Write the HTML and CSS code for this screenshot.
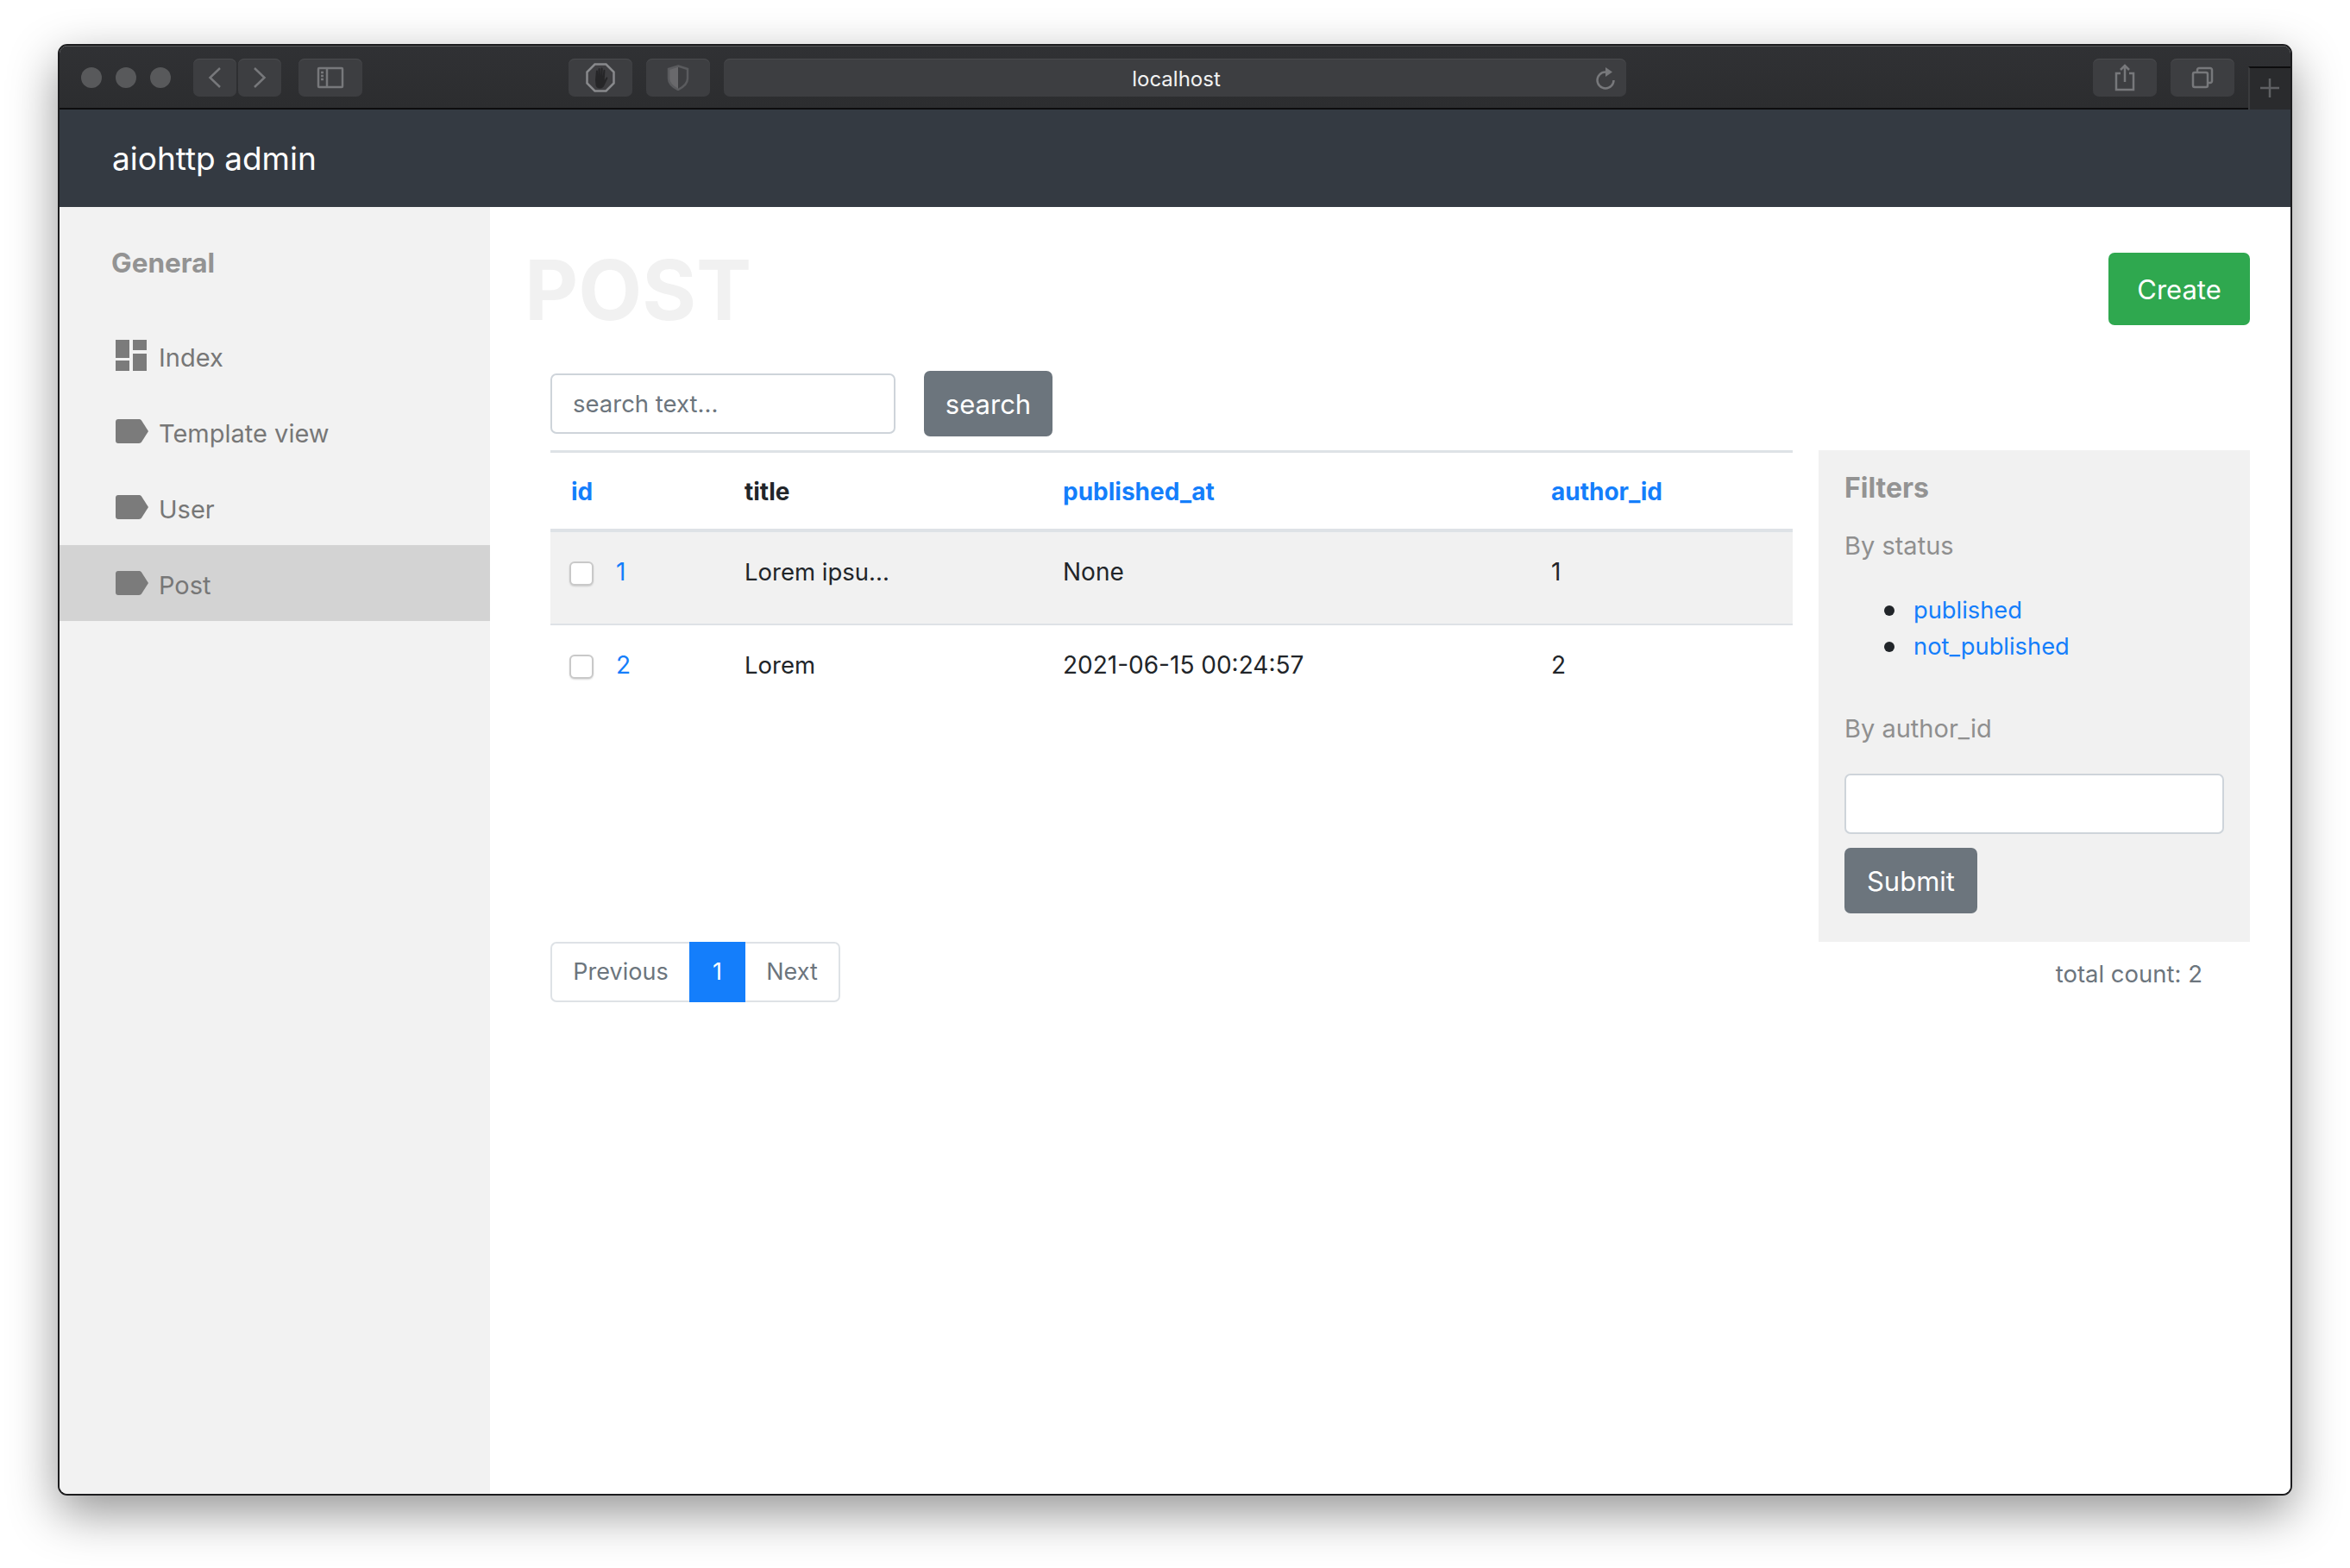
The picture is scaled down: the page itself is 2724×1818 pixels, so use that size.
FILE: index.html
```html
<!DOCTYPE html>
<html lang="en">
    <head>
        <meta charset="UTF-8">
        <meta name="viewport" content="width=device-width, initial-scale=1.0">
        <title>aiohttp admin</title>
        <link rel="stylesheet" href="styles.css">
    </head>

    <body>
        <div class="window">
            <!-- browser toolbar -->
            <div class="toolbar">
                <span class="light light-first"></span>
                <span class="light"></span>
                <span class="light"></span>

                <span class="tool tool-nav tool-back">
                    <svg width="16" height="26" viewBox="0 0 16 26"><path d="M14 2 2.500 13 14 24"/></svg>
                </span>
                <span class="tool tool-nav tool-forward">
                    <svg width="16" height="26" viewBox="0 0 16 26"><path d="M2 2 13.500 13 2 24"/></svg>
                </span>
                <span class="tool tool-side">
                    <svg width="32" height="26" viewBox="0 0 32 26">
                        <rect x="2" y="2" width="28" height="22" rx="1"/>
                        <path d="M12 2v22M5 7h3M5 11h3M5 15h3"/>
                    </svg>
                </span>
                <span class="tool tool-stop">
                    <svg width="34" height="34" viewBox="0 0 34 34">
                        <path class="octagon" d="M10.500 1.500h13l9 9v13l-9 9h-13l-9-9v-13z"/>
                        <path class="hand" d="M12 9c1-1 2 0 2 1v6l.5-9c.2-1.500 2-1.500 2.200 0l.3 8.500.6-9c.2-1.300 2-1.200 2 .2l-.1 9 1-7c.3-1.300 2-1 1.900.3l-.7 11 1.800-3c.8-1.200 2.300-.3 1.800 1l-3.800 8c-1 2-2.500 3.500-5 3.500-3 0-4.500-1.500-5-4l-.5-6z"/>
                    </svg>
                </span>
                <span class="tool tool-shield">
                    <svg width="26" height="30" viewBox="0 0 26 30">
                        <path class="shield-half" d="M13 1.500 2 5v11c0 6 5 10 11 13z"/>
                        <path d="M13 1.500 24 5v11c0 6-5 10-11 13-6-3-11-7-11-13V5z"/>
                    </svg>
                </span>
                <div class="url-bar">
                    <span class="url-text">localhost</span>
                    <svg class="reload" width="24" height="28" viewBox="0 0 24 28">
                        <path d="M12 7.500a9.500 9.500 0 1 0 9.500 9.500"/>
                        <path class="reload-head" d="M12 2v11l8-5.500z"/>
                    </svg>
                </div>
                <span class="tool tool-share">
                    <svg width="24" height="32" viewBox="0 0 24 32">
                        <path d="M7 11H2v19h20V11h-5M12 21V2M7 7l5-5 5 5"/>
                    </svg>
                </span>
                <span class="tool tool-tabs">
                    <svg width="26" height="26" viewBox="0 0 26 26">
                        <rect x="2" y="7" width="17" height="17" rx="2"/>
                        <path d="M7 7V4c0-1 1-2 2-2h13c1 0 2 1 2 2v13c0 1-1 2-2 2h-3"/>
                    </svg>
                </span>
                <span class="new-tab">
                    <svg width="24" height="24" viewBox="0 0 24 24"><path d="M12 1v22M1 12h22"/></svg>
                </span>
            </div>

            <div class="navbar">
                <a class="brand">aiohttp admin</a>
            </div>

            <div class="layout">
                <div class="sidebar">
                    <h4 class="sidebar-title">General</h4>
                    <ul class="menu">
                        <li class="menu-item">
                            <svg class="menu-icon" width="38" height="36" viewBox="0 0 38 36">
                                <path d="M0 0h16v21H0zM20 0h16v12H20zM0 24h16v12H0zM20 16h16v20H20z"/>
                            </svg>
                            <span>Index</span>
                        </li>
                        <li class="menu-item menu-item-tag">
                            <svg class="menu-icon" width="38" height="28" viewBox="0 0 38 28">
                                <path d="M3 0h24c1.500 0 2.500.6 3.200 1.700L38 14l-7.800 12.300c-.7 1.100-1.700 1.700-3.200 1.700H3c-1.700 0-3-1.300-3-3V3c0-1.700 1.300-3 3-3z"/>
                            </svg>
                            <span>Template view</span>
                        </li>
                        <li class="menu-item menu-item-tag">
                            <svg class="menu-icon" width="38" height="28" viewBox="0 0 38 28">
                                <path d="M3 0h24c1.500 0 2.500.6 3.200 1.700L38 14l-7.800 12.300c-.7 1.100-1.700 1.700-3.200 1.700H3c-1.700 0-3-1.300-3-3V3c0-1.700 1.300-3 3-3z"/>
                            </svg>
                            <span>User</span>
                        </li>
                        <li class="menu-item menu-item-tag active">
                            <svg class="menu-icon" width="38" height="28" viewBox="0 0 38 28">
                                <path d="M3 0h24c1.500 0 2.500.6 3.200 1.700L38 14l-7.800 12.300c-.7 1.100-1.700 1.700-3.200 1.700H3c-1.700 0-3-1.300-3-3V3c0-1.700 1.300-3 3-3z"/>
                            </svg>
                            <span>Post</span>
                        </li>
                    </ul>
                </div>

                <div class="main">
                    <div class="page-head">
                        <h1 class="page-title">POST</h1>
                        <button class="btn btn-create">Create</button>
                    </div>

                    <form class="search-form">
                        <input class="input input-search" type="text" placeholder="search text...">
                        <button class="btn btn-grey btn-search">search</button>
                    </form>

                    <div class="columns">
                        <div class="col-left">
                            <div class="table-wrap">
                                <table class="table">
                                    <colgroup>
                                        <col class="w-id">
                                        <col class="w-title">
                                        <col class="w-date">
                                        <col class="w-author">
                                    </colgroup>
                                    <thead>
                                        <tr>
                                            <th><a class="link">id</a></th>
                                            <th>title</th>
                                            <th><a class="link">published_at</a></th>
                                            <th><a class="link">author_id</a></th>
                                        </tr>
                                    </thead>
                                    <tbody>
                                        <tr class="row-hover">
                                            <td class="cell-id"><input class="check" type="checkbox"><a class="link">1</a></td>
                                            <td class="cell-title">Lorem ipsu...</td>
                                            <td>None</td>
                                            <td>1</td>
                                        </tr>
                                        <tr>
                                            <td class="cell-id"><input class="check" type="checkbox"><a class="link">2</a></td>
                                            <td class="cell-title">Lorem</td>
                                            <td>2021-06-15 00:24:57</td>
                                            <td>2</td>
                                        </tr>
                                    </tbody>
                                </table>
                            </div>

                            <div class="pagination">
                                <a class="page page-first">Previous</a>
                                <a class="page page-active">1</a>
                                <a class="page page-last">Next</a>
                            </div>
                        </div>

                        <div class="col-right">
                            <div class="filters">
                                <h5 class="filters-title">Filters</h5>
                                <p class="filter-label">By status</p>
                                <ul class="filter-list">
                                    <li><a class="link">published</a></li>
                                    <li><a class="link">not_published</a></li>
                                </ul>
                                <p class="filter-label filter-label-author">By author_id</p>
                                <input class="input input-filter" type="text">
                                <button class="btn btn-grey btn-submit">Submit</button>
                            </div>
                            <p class="total">total count: 2</p>
                        </div>
                    </div>
                </div>
            </div>
        </div>
    </body>
</html>
```

FILE: styles.css
```css
* {
    box-sizing: border-box;
}

html, body {
    margin: 0;
    height: 100%;
    background-color: #ffffff;
}

body {
    padding: 51px 0 0 67px;
    font-family: Inter, "Noto Sans", sans-serif;
    font-size: 28px;
    color: #212529;
    overflow: hidden;
}

.window {
    display: flex;
    flex-direction: column;
    width: 2590px;
    height: 1683px;
    border: 2px solid #1c1c1e;
    border-radius: 11px;
    overflow: hidden;
    background-color: #f2f2f2;
    box-shadow: 0 20px 56px rgba(0, 0, 0, 0.42);
}

/* toolbar */
.toolbar {
    display: flex;
    align-items: flex-start;
    flex-shrink: 0;
    height: 74px;
    padding: 15px 0 0 25px;
    background: linear-gradient(#303134, #2c2d2f);
    border-bottom: 2px solid #0d0d0e;
    box-shadow: inset 0 1px 0 #565759;
}

.light {
    width: 24px;
    height: 24px;
    margin: 10px 0 0 16px;
    border-radius: 50%;
    background-color: #58595b;
}

.light-first {
    margin-left: 0;
}

.tool {
    display: flex;
    align-items: center;
    justify-content: center;
    width: 74px;
    height: 44px;
    border-radius: 7px;
    background-color: #3d3e41;
    box-shadow: inset 0 1px 0 #4a4b4e;
}

.tool svg,
.reload,
.new-tab svg {
    fill: none;
    stroke: #77787b;
    stroke-width: 2.500;
}

.tool-nav {
    width: 50px;
}

.tool-back {
    margin-left: 26px;
}

.tool-forward {
    margin-left: 2px;
}

.tool-side {
    margin-left: 20px;
}

.tool-stop {
    margin-left: 239px;
}

.tool-stop .octagon {
    fill: #3e3e41;
    stroke: #88898c;
}

.tool-stop .hand {
    fill: #262628;
    stroke: none;
}

.tool-shield {
    margin-left: 16px;
}

.tool-shield svg {
    stroke: #5a5b5e;
}

.tool-shield .shield-half {
    fill: #69696c;
    stroke: none;
}

.url-bar {
    position: relative;
    display: flex;
    align-items: center;
    justify-content: center;
    width: 1046px;
    height: 44px;
    margin-left: 16px;
    padding: 2px 0 0 3px;
    border-radius: 7px;
    background-color: #3d3e41;
    box-shadow: inset 0 1px 0 #4a4b4e;
}

.url-text {
    font-size: 24px;
    color: #f2f2f2;
}

.reload {
    position: absolute;
    right: 12px;
    top: 8px;
}

.reload .reload-head {
    fill: #77787b;
    stroke: none;
}

.tool-share {
    margin-left: 541px;
}

.tool-tabs {
    margin-left: 16px;
}

.new-tab {
    display: flex;
    align-items: center;
    justify-content: center;
    width: 49px;
    height: 50px;
    margin: 9px 0 0 16px;
    padding: 0 2px 3px 0;
    border-top: 2px solid #0d0d0e;
    border-left: 2px solid #3a3b3d;
    background-color: #2a2b2d;
}

.new-tab svg {
    stroke: #5f6063;
}

/* navbar */
.navbar {
    display: flex;
    align-items: center;
    flex-shrink: 0;
    height: 113px;
    padding-left: 61px;
    background-color: #343a42;
}

.brand {
    font-size: 37px;
    color: #ffffff;
}

.layout {
    display: flex;
    flex: 1;
    min-height: 0;
}

/* sidebar */
.sidebar {
    width: 499px;
    flex-shrink: 0;
    background-color: #f2f2f2;
}

.sidebar-title {
    margin: 46px 0 44px 60px;
    font-size: 31.500px;
    font-weight: 700;
    line-height: 38px;
    color: #939393;
}

.menu {
    margin: 0;
    padding: 0;
    list-style: none;
}

.menu-item {
    display: flex;
    align-items: flex-start;
    height: 88px;
    padding: 26px 0 0 65px;
    color: #777777;
    line-height: 34px;
    font-size: 29px;
}

.menu-item span {
    margin: 4px 0 0 12px;
}

.menu-item-tag {
    padding-top: 30px;
}

.menu-item-tag span {
    margin-top: 0;
}

.menu-icon {
    flex-shrink: 0;
    fill: #7b7b7b;
}

.menu-item.active {
    background-color: #d3d3d3;
}

/* main */
.main {
    flex: 1;
    padding-right: 47px;
    background-color: #ffffff;
}

.page-head {
    display: flex;
    justify-content: space-between;
    height: 190px;
    padding: 53px 0 0 40px;
}

.page-title {
    margin: -5px 0 0;
    font-size: 96px;
    font-weight: 700;
    line-height: 96px;
    color: #f1f1f1;
}

.btn {
    border: none;
    border-radius: 7px;
    color: #ffffff;
    font-family: inherit;
    font-size: 31px;
}

.btn-create {
    width: 164px;
    height: 84px;
    background-color: #2fa84f;
}

.btn-grey {
    background-color: #6c757d;
}

.search-form {
    display: flex;
    align-items: flex-start;
    height: 92px;
    margin-left: 70px;
}

.input {
    display: block;
    border: 2px solid #ced4da;
    border-radius: 7px;
    background-color: #ffffff;
    font-family: inherit;
    font-size: 27.500px;
}

.input::placeholder {
    color: #6c757d;
    opacity: 1;
}

.input-search {
    width: 400px;
    height: 70px;
    margin-top: 3px;
    padding: 0 24px;
}

.btn-search {
    width: 149px;
    height: 76px;
    margin-left: 33px;
}

.columns {
    display: flex;
    gap: 30px;
    margin-left: 70px;
}

.col-left {
    width: 1440px;
}

.col-right {
    width: 500px;
}

/* table */
.table-wrap {
    height: 570px;
}

.table {
    width: 100%;
    table-layout: fixed;
    border-collapse: collapse;
}

.w-id {
    width: 201px;
}

.w-title {
    width: 369px;
}

.w-date {
    width: 566px;
}

.w-author {
    width: 304px;
}

.table th {
    height: 91px;
    padding: 3px 24px 0;
    border-top: 3px solid #dee2e6;
    border-bottom: 4px solid #dee2e6;
    text-align: left;
    font-weight: 700;
}

.table td {
    height: 109px;
    padding: 27px 24px 0;
    vertical-align: top;
    line-height: 38px;
    border-bottom: 2px solid #dee2e6;
}

.table .cell-title {
    font-size: 27.500px;
}

.table tbody tr:last-child td {
    border-bottom: none;
}

.row-hover {
    background-color: #f1f1f1;
}

.table .cell-id {
    padding-left: 22px;
}

.check {
    width: 28px;
    height: 28px;
    margin: 7px 26px 0 0;
    vertical-align: top;
    appearance: none;
    border: 2px solid #c9c9c9;
    border-radius: 6px;
    background-color: #ffffff;
    box-shadow: 0 1px 2px rgba(0, 0, 0, 0.15);
}

.link {
    color: #147efb;
    text-decoration: none;
}

/* pagination */
.pagination {
    display: flex;
    width: 336px;
    height: 70px;
    line-height: 66px;
    font-size: 27px;
}

.page {
    border: 2px solid #dee2e6;
    border-left: none;
    border-right: none;
    color: #6c757d;
    text-align: center;
}

.page-first {
    width: 161px;
    border-left: 2px solid #dee2e6;
    border-radius: 7px 0 0 7px;
}

.page-active {
    width: 65px;
    border-color: #147efb;
    background-color: #147efb;
    color: #ffffff;
}

.page-last {
    width: 110px;
    border-right: 2px solid #dee2e6;
    border-radius: 0 7px 7px 0;
}

/* filters */
.filters {
    height: 570px;
    padding: 26px 31px 0 30px;
    background-color: #f1f1f1;
}

.filters-title {
    margin: 0;
    font-size: 32px;
    font-weight: 700;
    line-height: 36px;
    color: #939393;
}

.filter-label {
    margin: 30px 0 0;
    font-size: 29px;
    line-height: 38px;
    color: #8f8f8f;
}

.filter-list {
    margin: 35px 0 0;
    padding-left: 46px;
    list-style: none;
    line-height: 42px;
    font-size: 27.300px;
}

.filter-list li {
    display: flex;
    align-items: center;
}

.filter-list li::before {
    content: "";
    width: 12px;
    height: 12px;
    margin-right: 22px;
    border-radius: 50%;
    background-color: #212529;
}

.filter-label-author {
    margin-top: 55px;
}

.input-filter {
    width: 440px;
    height: 70px;
    margin-top: 33px;
}

.btn-submit {
    width: 154px;
    height: 76px;
    margin-top: 16px;
}

.total {
    margin: 18px 55px 0 0;
    font-size: 27.500px;
    line-height: 38px;
    text-align: right;
    color: #6c757d;
}
```
